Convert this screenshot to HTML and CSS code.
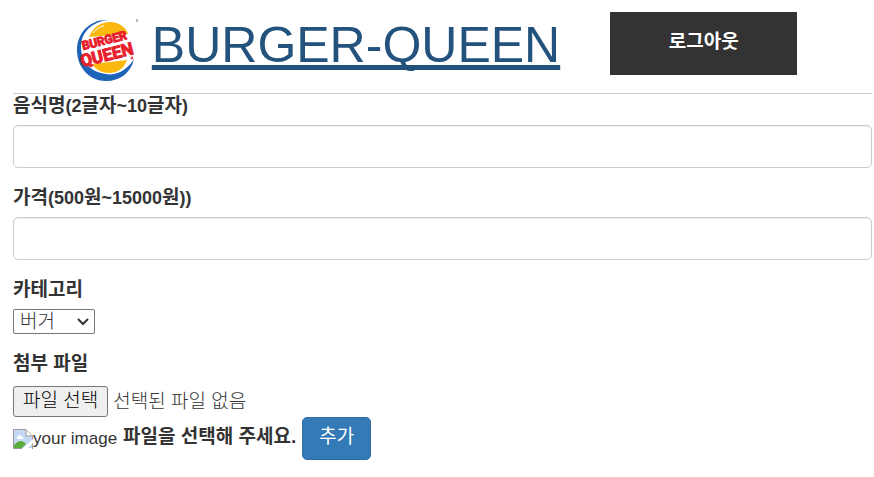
FILE: index.html
```html
<!DOCTYPE html>
<html lang="ko">
<head>
<meta charset="utf-8">
<meta name="viewport" content="width=device-width, initial-scale=1">
<title>BURGER-QUEEN</title>
<link rel="stylesheet" href="styles.css">
</head>
<body>
<header class="header">
  <a class="brand" href="#">
    <svg class="logo" viewBox="0 0 62 64" role="img" aria-label="BURGER QUEEN">
      <path d="M31 2C13 1 0 15 0 32c0 18 13 31 29 31 14 0 25-8 28-22-7 11-17 17-28 15C13 54 4 43 4 29 4 14 15 4 31 2z" fill="#1d63b8"/>
      <path d="M12 19C16 9 24 4 33 4c9 0 16 5 18 12z" fill="#fbb80f"/>
      <path d="M15 46c4 6 10 9 17 9 9 0 15-5 18-13z" fill="#fbb80f"/>
      <path d="M16 15c3-4 6-6 11-7" fill="none" stroke="#fff" stroke-width="1"/>
      <g class="logo-text">
        <text x="6" y="32" font-size="12" transform="rotate(-14 6 32)">BURGER</text>
        <text x="5" y="49" font-size="17" transform="rotate(-14 5 49)">QUEEN</text>
      </g>
      <circle cx="55" cy="40" r="1" fill="none" stroke="#e8202b" stroke-width="1"/>
      <path d="M60 1v3" stroke="#777" stroke-width="1"/>
    </svg>
    <span class="brand-name">BURGER-QUEEN</span>
  </a>
  <button class="logout" type="button">로그아웃</button>
</header>
<main>
  <form class="food-form">
    <div class="field">
      <label for="name">음식명<span class="latin">(2</span>글자<span class="latin">~10</span>글자<span class="latin">)</span></label>
      <input class="text-input" id="name" type="text">
    </div>
    <div class="field">
      <label for="price">가격<span class="latin">(500</span>원<span class="latin">~15000</span>원<span class="latin">))</span></label>
      <input class="text-input" id="price" type="text">
    </div>
    <div class="field">
      <label for="category">카테고리</label>
      <div class="select-wrap">
        <select id="category"><option>버거</option></select>
        <svg class="chevron" viewBox="0 0 12 8" aria-hidden="true"><path d="M1 1l5 5 5-5" fill="none" stroke="#333" stroke-width="2"/></svg>
      </div>
    </div>
    <div class="field-file">
      <label for="file">첨부 파일</label>
      <div class="file">
        <span class="file-button">파일 선택</span>
        <span class="file-status">선택된 파일 없음</span>
        <input class="file-input" id="file" type="file">
      </div>
    </div>
    <div class="actions">
      <span class="preview">
        <svg class="broken" viewBox="0 0 20 20" aria-hidden="true">
          <path d="M1 1h12l6 6v12H1z" fill="#c5d9f7"/>
          <path d="M4 9c0-3 4-4 5-1 2 0 2 2 1 2H4z" fill="#fff"/>
          <path d="M1 19v-3c4-5 9-5 12-1l-4 4z" fill="#5aac3c"/>
          <path d="M.5 20V.5H13l6.500 6.500V20" fill="none" stroke="#999"/>
          <path d="M13 1v6h6" fill="#fff" stroke="#999"/>
          <path d="M9 20l11-10v4l-6 6z" fill="#fff"/>
          <path d="M1 19.500h8" stroke="#999"/>
        </svg><span>your image</span>
      </span>
      <strong class="hint">파일을 선택해 주세요.</strong>
      <button class="submit" type="submit">추가</button>
    </div>
  </form>
</main>
</body>
</html>
```

FILE: styles.css
```css
* {
  box-sizing: border-box;
}

body {
  margin: 0;
  padding: 0 2px 0 13px;
  color: #333;
  background: #fff;
  font-family: "Liberation Sans", "Noto Sans CJK KR", sans-serif;
  font-size: 19px;
  line-height: 24px;
}

button,
input,
select {
  font: inherit;
}

.header {
  display: flex;
  justify-content: center;
  align-items: flex-start;
  gap: 50px;
  padding: 12px 11px 18px 0;
  border-bottom: 1px solid #ccc;
}

.brand {
  display: flex;
  gap: 13px;
  height: 63px;
  color: #23527c;
  text-decoration: none;
}

.logo {
  width: 62px;
  height: 64px;
  margin-top: 6px;
}

.logo-text {
  fill: #e8202b;
  font-family: Roboto, "Liberation Sans", sans-serif;
  font-weight: bold;
  stroke: #e8202b;
  stroke-width: 1px;
}

.brand-name {
  font-size: 50px;
  line-height: 66px;
  text-decoration: underline;
  text-decoration-skip-ink: none;
  text-decoration-thickness: 5px;
  text-underline-offset: 3px;
}

.logout {
  width: 187px;
  height: 63px;
  padding: 0 0 3px;
  border: 0;
  color: #fff;
  background: #333;
  font-weight: bold;
}

.field {
  margin-bottom: 18px;
}

label {
  display: block;
  margin-bottom: 7px;
  font-weight: bold;
}

.latin {
  font-size: 18px;
}

.text-input {
  display: block;
  width: 100%;
  height: 43px;
  padding: 6px 15px;
  border: 1px solid #ccc;
  border-radius: 5px;
  box-shadow: inset 0 1px 1px rgba(0, 0, 0, 0.075);
}

.select-wrap {
  position: relative;
  width: 82px;
}

select {
  display: block;
  width: 100%;
  height: 25px;
  padding: 0 0 0 6px;
  border: 1px solid #767676;
  border-radius: 2px;
  color: #333;
  background: #fff;
  line-height: 23px;
  font-weight: 300;
  appearance: none;
}

.chevron {
  position: absolute;
  top: 9px;
  right: 6px;
  width: 12px;
  height: 8px;
  pointer-events: none;
}

.file {
  position: relative;
  display: flex;
  align-items: center;
  gap: 5px;
  width: fit-content;
  padding-top: 3px;
  font-weight: 300;
}

.file-button {
  height: 31px;
  padding: 2px 9px;
  border: 1px solid #767676;
  border-radius: 3px;
  color: #000;
  background: #efefef;
}

.file-input {
  position: absolute;
  inset: 0;
  width: 100%;
  opacity: 0;
}

.actions {
  display: flex;
  align-items: center;
  gap: 6px;
}

.preview {
  display: flex;
  align-items: center;
  font-size: 17px;
}

.broken {
  width: 20px;
  height: 20px;
}

.hint {
  padding-bottom: 3px;
}

.submit {
  height: 43px;
  padding: 0 16px 3px;
  border: 1px solid #2e6da4;
  border-radius: 5px;
  color: #fff;
  background: #337ab7;
}
```
